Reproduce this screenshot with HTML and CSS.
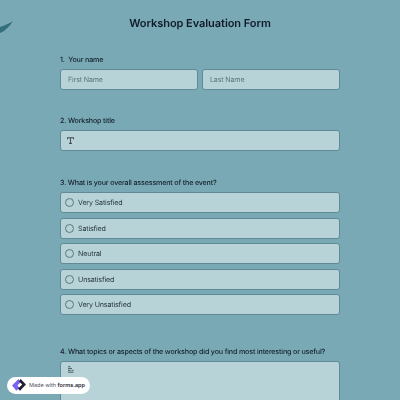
FILE: index.html
```html
<!DOCTYPE html>
<html lang="en">
<head>
    <meta charset="UTF-8">
    <meta name="viewport" content="width=device-width, initial-scale=1.0">
    <title>Workshop Evaluation Form</title>
    <link rel="stylesheet" href="styles.css">
</head>
<body>
    <!-- Background leaf -->
    <svg class="leaf" width="14" height="14" viewBox="0 0 14 14">
        <path d="M13 0 C10 2 6 4 0 6 L0 12 C5 10 9 6 13 0 Z" fill="#336f7c"/>
    </svg>

    <main class="form">
        <h1 class="form-title">Workshop Evaluation Form</h1>

        <section class="question q-name">
            <p class="label">1.&nbsp; Your name</p>
            <div class="name-row">
                <div class="field">First Name</div>
                <div class="field">Last Name</div>
            </div>
        </section>

        <section class="question q-title">
            <p class="label">2. Workshop title</p>
            <div class="field field-icon">
                <svg width="7" height="7" viewBox="0 0 8 8">
                    <path d="M.6 2.600V.9h6.800v1.700M4 .9v6.400M2.400 7.300h3.200" fill="none" stroke="#3f4f57" stroke-width="1.200"/>
                </svg>
            </div>
        </section>

        <section class="question q-choice">
            <p class="label">3. What is your overall assessment of the event?</p>
            <div class="options">
                <div class="option"><span class="radio"></span>Very Satisfied</div>
                <div class="option"><span class="radio"></span>Satisfied</div>
                <div class="option"><span class="radio"></span>Neutral</div>
                <div class="option"><span class="radio"></span>Unsatisfied</div>
                <div class="option"><span class="radio"></span>Very Unsatisfied</div>
            </div>
        </section>

        <section class="question q-topics">
            <p class="label">4. What topics or aspects of the workshop did you find most interesting or useful?</p>
            <div class="textarea">
                <svg width="8" height="8" viewBox="0 0 8 8">
                    <path d="M1 .8h2.500M1 2.600h4M1 4.400h2.500M1 6.200h5.500M4.500 4.400H6.500" fill="none" stroke="#3f4f57" stroke-width=".9"/>
                </svg>
            </div>
        </section>
    </main>

    <!-- Made with badge -->
    <a class="badge">
        <svg width="16" height="15" viewBox="0 0 15 14">
            <path d="M7 1 1 7l4 5 3-3-2-2 3-3z" fill="#7b61f0"/>
            <path d="M9 1 14 6l-5.500 6-2-2 4-4-3-3z" fill="#1c1f2e"/>
        </svg>
        <span>Made with <b>forms.app</b></span>
    </a>
</body>
</html>
```

FILE: styles.css
```css
* {
    margin: 0;
    padding: 0;
    box-sizing: border-box;
}

html, body {
    height: 400px;
    overflow: hidden;
}

body {
    font-family: Inter, "Liberation Sans", sans-serif;
    text-rendering: geometricPrecision;
    background-color: #78a9b4;
    color: #15202b;
}

.leaf {
    position: absolute;
    left: 0;
    top: 21px;
}

.form {
    width: 280px;
    margin: 0 auto;
    padding-top: 16px;
    will-change: opacity;
}

.form-title {
    font-size: 11px;
    font-weight: 600;
    line-height: 15px;
    letter-spacing: -0.05px;
    text-align: center;
    color: #101a2c;
}

.label {
    font-size: 7.100px;
    font-weight: 500;
    line-height: 11px;
    letter-spacing: -0.15px;
    margin-bottom: 4px;
    color: #15202b;
}

.q-name {
    margin-top: 23px;
}

.q-title {
    margin-top: 25px;
}

.q-choice {
    margin-top: 26px;
}

.q-topics {
    margin-top: 31px;
}

.name-row {
    display: flex;
    gap: 4px;
}

.field, .option, .textarea {
    background-color: #b8d3d8;
    border: 1px solid #5f8a96;
    border-bottom-width: 1.500px;
    border-radius: 3px;
    font-size: 7.100px;
    letter-spacing: -0.15px;
}

.field {
    flex: 1;
    display: flex;
    align-items: center;
    height: 21px;
    padding: 0 7px;
    color: #5c747e;
}

.field-icon {
    padding-left: 5.500px;
}

.field-icon svg {
    display: block;
}

.options {
    display: flex;
    flex-direction: column;
    gap: 4.500px;
}

.option {
    display: flex;
    align-items: center;
    height: 21px;
    padding: 0 4px;
    color: #27363f;
}

.radio {
    width: 9px;
    height: 9px;
    margin-right: 4px;
    border: 1px solid #5c7680;
    border-radius: 50%;
}

.textarea {
    height: 60px;
    padding: 4px 5.500px;
}

.badge {
    position: absolute;
    left: 7px;
    top: 377px;
    display: flex;
    align-items: center;
    gap: 2px;
    height: 17px;
    padding: 0 5px 0 4px;
    background-color: #fff;
    border-radius: 9px;
    font-size: 5.500px;
    color: #4b4f5c;
    will-change: opacity;
}

.badge b {
    font-weight: 600;
    color: #1c1f2e;
}
```
